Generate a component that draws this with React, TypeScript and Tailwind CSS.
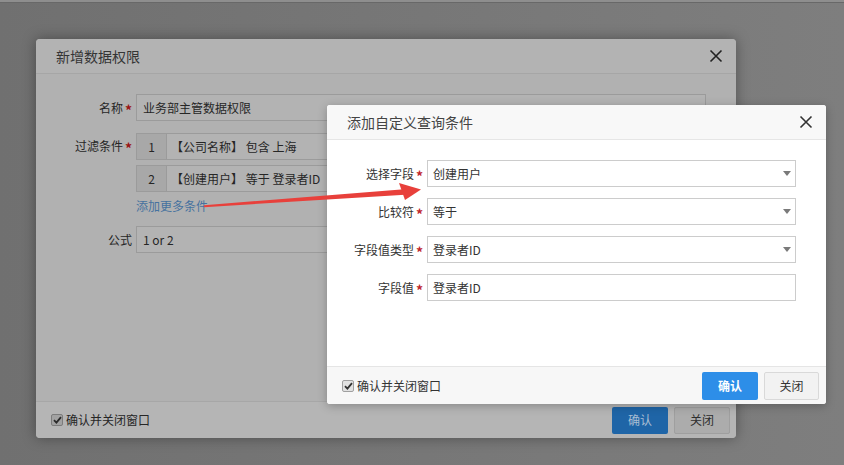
import React from "react";

const font = { fontFamily: '"Noto Sans CJK SC", "Liberation Sans", sans-serif' };

const CloseIcon: React.FC<{ color: string }> = ({ color }) => (
  <svg width="14" height="14" viewBox="0 0 14 14">
    <path d="M1.5 1.5 L12.5 12.5 M12.5 1.5 L1.5 12.5" stroke={color} strokeWidth="1.6" fill="none" />
  </svg>
);

const Caret: React.FC = () => (
  <svg width="8" height="5" viewBox="0 0 8 5" className="mr-[4px]">
    <path d="M0 0 L8 0 L4 5 Z" fill="#7a7a7a" />
  </svg>
);

const CheckBox: React.FC<{ dim?: boolean }> = ({ dim }) => (
  <span
    className={`inline-flex h-[12px] w-[12px] items-center justify-center rounded-[2px] border ${
      dim ? "border-[#7c7c7c] bg-[#a2a2a2]" : "border-[#a0a0a0] bg-[#e2e2e2]"
    }`}
  >
    <svg width="9" height="8" viewBox="0 0 9 8">
      <path d="M1 4.2 L3.4 6.6 L8 1.2" stroke={dim ? "#2a2a2a" : "#333"} strokeWidth="1.8" fill="none" />
    </svg>
  </span>
);

// back dialog, dimmed by the modal mask
const BackDialog: React.FC = () => {
  const label = "w-[100px] shrink-0 pr-[4px] text-right text-[12px] text-[#262626]";
  const star = <span className="relative top-[3px] ml-[2px] text-[14px] font-bold leading-[0] text-[#9a1414]">*</span>;
  const box = "h-[27px] border border-[#9b9b9b] bg-[#b3b3b3] text-[12px] text-[#262626] flex items-center";
  return (
    <div className="absolute left-[36px] top-[39px] flex h-[399px] w-[700px] flex-col overflow-hidden rounded-[4px] bg-[#b1b1b1] shadow-[0_0_14px_rgba(0,0,0,0.35)]">
      <div className="flex h-[35px] shrink-0 items-center justify-between border-b border-[#a6a6a6] bg-[#b3b3b3] pl-[20px] pr-[13px]">
        <span className="text-[14px] leading-[18px] text-[#353535]">新增数据权限</span>
        <CloseIcon color="#222" />
      </div>
      <div className="flex flex-1 flex-col pt-[20px] pr-[30px]">
        <div className="flex items-center leading-[16px]">
          <div className={label}>名称{star}</div>
          <div className={`${box} flex-1 pl-[6px]`}>业务部主管数据权限</div>
        </div>
        <div className="mt-[11px] flex leading-[16px]">
          <div className={`${label} pt-[6px]`}>过滤条件{star}</div>
          <div className="flex flex-1 flex-col">
            <div className={`${box} mt-[1px]`}>
              <span className="flex h-full w-[30px] items-center justify-center border-r border-[#9b9b9b] bg-[#a8a8a8]">1</span>
              <span className="pl-[4px]">【公司名称】 包含 上海</span>
            </div>
            <div className={`${box} mt-[5px]`}>
              <span className="flex h-full w-[30px] items-center justify-center border-r border-[#9b9b9b] bg-[#a8a8a8]">2</span>
              <span className="pl-[4px]">【创建用户】 等于 登录者ID</span>
            </div>
            <div className="mt-[5px] h-[18px] text-[12px] leading-[18px] text-[#46729f]">添加更多条件</div>
          </div>
        </div>
        <div className="mt-[11px] flex items-center leading-[16px]">
          <div className={label}>公式</div>
          <div className={`${box} flex-1 pl-[6px]`}>1 or 2</div>
        </div>
      </div>
      <div className="flex h-[37px] shrink-0 items-center justify-between border-t border-[#a7a7a7] bg-[#b5b5b5] pl-[15px] pr-[6px]">
        <div className="flex items-center gap-[3px] text-[12px] leading-[16px] text-[#262626]">
          <CheckBox dim />
          确认并关闭窗口
        </div>
        <div className="flex gap-[6px]">
          <button className="h-[27px] w-[56px] rounded-[2px] bg-[#1f65a7] text-[12px] text-[#a9bed3]">确认</button>
          <button className="h-[27px] w-[56px] rounded-[2px] border border-[#9f9f9f] bg-[#acacac] text-[12px] text-[#2e2e2e]">关闭</button>
        </div>
      </div>
    </div>
  );
};

const FrontDialog: React.FC = () => {
  const label = "w-[100px] shrink-0 pr-[4px] text-right text-[12px] text-[#333]";
  const star = <span className="relative top-[3px] ml-[2px] text-[14px] font-bold leading-[0] text-[#c0272d]">*</span>;
  const field = "flex h-[27px] flex-1 items-center justify-between border border-[#cccccc] bg-white pl-[5px] text-[12px] text-[#333]";
  const rows: { label: string; value: string; select: boolean }[] = [
    { label: "选择字段", value: "创建用户", select: true },
    { label: "比较符", value: "等于", select: true },
    { label: "字段值类型", value: "登录者ID", select: true },
    { label: "字段值", value: "登录者ID", select: false },
  ];
  return (
    <div className="absolute left-[327px] top-[105px] flex h-[299px] w-[499px] flex-col overflow-hidden rounded-[3px] bg-white shadow-[0_2px_10px_rgba(0,0,0,0.25)]">
      <div className="flex h-[35px] shrink-0 items-center justify-between border-b border-[#e6e6e6] bg-[#f8f8f8] pl-[20px] pr-[13px]">
        <span className="text-[14px] leading-[18px] text-[#444]">添加自定义查询条件</span>
        <CloseIcon color="#333" />
      </div>
      <div className="flex flex-1 flex-col gap-[11px] pt-[20px] pr-[30px]">
        {rows.map((r) => (
          <div key={r.label} className="flex items-center leading-[16px]">
            <div className={label}>
              {r.label}
              {star}
            </div>
            <div className={field}>
              <span>{r.value}</span>
              {r.select && <Caret />}
            </div>
          </div>
        ))}
      </div>
      <div className="flex h-[38px] shrink-0 items-center justify-between border-t border-[#e5e5e5] bg-[#f7f7f7] pl-[15px] pr-[7px]">
        <div className="flex items-center gap-[3px] text-[12px] leading-[16px] text-[#333]">
          <CheckBox />
          确认并关闭窗口
        </div>
        <div className="flex gap-[6px]">
          <button className="h-[28px] w-[56px] rounded-[2px] bg-[#2d8ee8] text-[12px] font-bold text-white">确认</button>
          <button className="h-[28px] w-[55px] rounded-[2px] border border-[#d9d9d9] bg-[#f2f2f2] text-[12px] text-[#333]">关闭</button>
        </div>
      </div>
    </div>
  );
};

const Arrow: React.FC = () => (
  <svg className="pointer-events-none absolute left-0 top-0" width="844" height="465" viewBox="0 0 844 465">
    <polygon points="204,205.2 404,189.2 405,194.8 204,207.2" fill="#e8403b" />
    <polygon points="399,183 421,189.5 405,200" fill="#e8403b" />
  </svg>
);

export default function App() {
  return (
    <div style={font} className="relative h-[465px] w-[844px] overflow-hidden bg-linear-to-r from-[#707070] to-[#7e7e7e]">
      <div className="h-[2px] bg-[#8e8e8e]" />
      <div className="h-[1px] bg-[#686868]" />
      <BackDialog />
      <FrontDialog />
      <Arrow />
    </div>
  );
}
